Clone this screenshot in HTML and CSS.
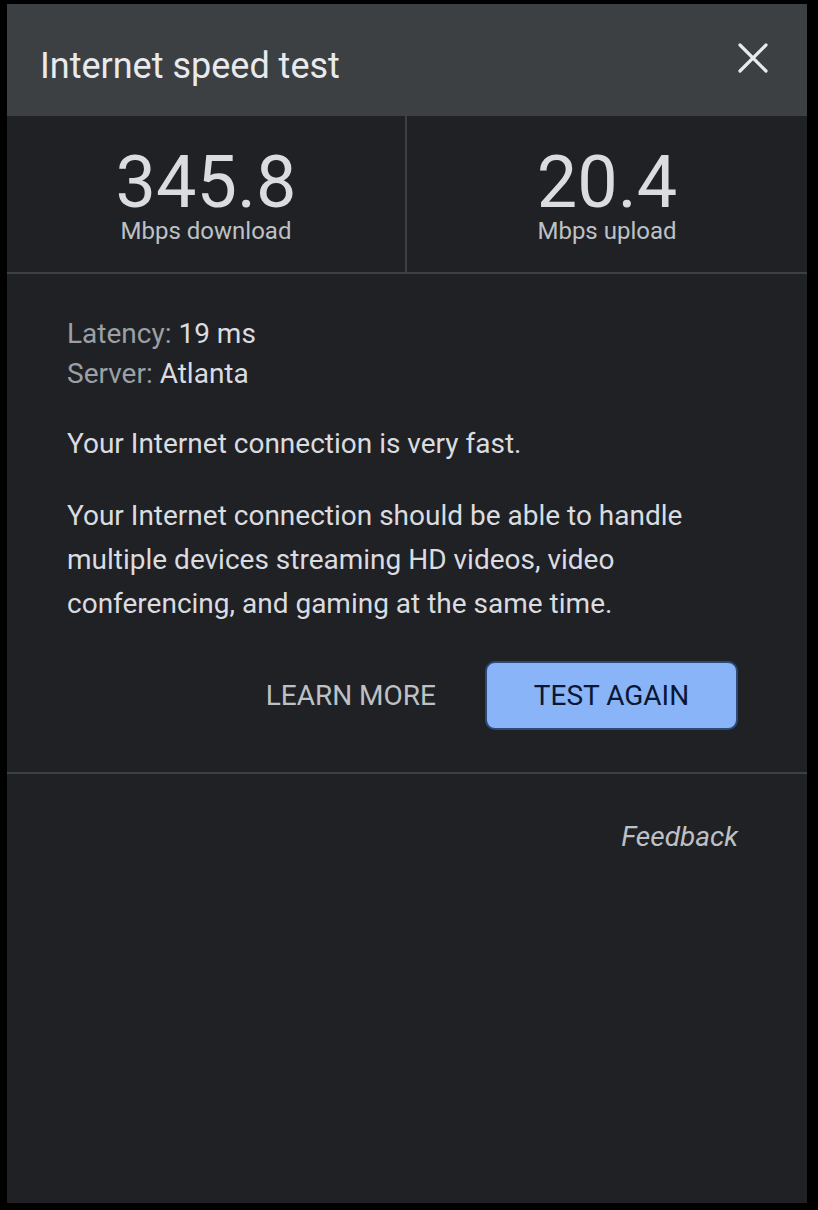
FILE: index.html
```html
<!DOCTYPE html>
<html lang="en">
<head>
  <meta charset="UTF-8" />
  <meta name="viewport" content="width=device-width, initial-scale=1.0"/>
  <title>Internet speed test</title>
  <link rel="stylesheet" href="styles.css">
</head>
<body>
  <div class="panel">
    <div class="panel-header">
      <h1>Internet speed test</h1>
      <button class="close" aria-label="Close">
        <svg width="30" height="30" viewBox="0 0 30 30">
          <path d="M2 2 L28 28 M28 2 L2 28" stroke="#e8eaed" stroke-width="3.2" stroke-linecap="round" fill="none"/>
        </svg>
      </button>
    </div>

    <div class="stats">
      <div class="stat">
        <span class="stat-value">345.8</span>
        <span class="stat-label">Mbps download</span>
      </div>
      <div class="stat">
        <span class="stat-value">20.4</span>
        <span class="stat-label">Mbps upload</span>
      </div>
    </div>

    <div class="details">
      <div class="meta">
        <div><span class="key">Latency:</span> 19 ms</div>
        <div><span class="key">Server:</span> Atlanta</div>
      </div>
      <p class="verdict">Your Internet connection is very fast.</p>
      <p class="summary">Your Internet connection should be able to handle multiple devices streaming HD videos, video conferencing, and gaming at the same time.</p>
      <div class="actions">
        <a class="learn-more" href="#">LEARN MORE</a>
        <button class="test-again">TEST AGAIN</button>
      </div>
    </div>

    <div class="footer">
      <a class="feedback" href="#">Feedback</a>
    </div>
  </div>
</body>
</html>
```

FILE: styles.css
```css
body {
  margin: 0;
  background-color: #000;
  font-family: Roboto, "Liberation Sans", Arial, sans-serif;
  color: #e8eaed;
}
.panel {
  width: 800px;
  height: 1199px;
  margin: 4px 0 0 7px;
  background: #202124;
  display: flex;
  flex-direction: column;
}
.panel-header {
  height: 112px;
  background: #3c4043;
  display: flex;
  align-items: center;
  justify-content: space-between;
  padding: 0 39px 0 33px;
  box-sizing: border-box;
}
.panel-header h1 {
  margin: 0;
  font-size: 36px;
  font-weight: 400;
  color: #e8eaed;
  padding-top: 12px;
}
.close {
  background: none;
  border: none;
  padding: 0;
  width: 30px;
  height: 30px;
  margin-top: -4px;
}
.stats {
  display: grid;
  grid-template-columns: 400px 1fr;
  height: 158px;
  border-bottom: 2px solid #3c4043;
  box-sizing: border-box;
}
.stat {
  display: flex;
  flex-direction: column;
  align-items: center;
  padding-top: 32px;
}
.stat:first-child {
  border-right: 2px solid #3c4043;
}
.stat-value {
  font-size: 72px;
  line-height: 70px;
  color: #dadce0;
}
.stat-label {
  font-size: 24px;
  line-height: 26px;
  color: #bdc1c6;
}
.details {
  padding: 40px 69px 42px 60px;
  border-bottom: 2px solid #3c4043;
  font-size: 28px;
  color: #dadce0;
}
.meta {
  line-height: 40px;
}
.key {
  color: #9aa0a6;
}
.verdict {
  margin: 28px 0 0;
  line-height: 44px;
}
.summary {
  margin: 28px 0 0;
  line-height: 44px;
}
.actions {
  display: flex;
  align-items: center;
  justify-content: flex-end;
  gap: 49px;
  margin-top: 35px;
}
.learn-more {
  color: #bdc1c6;
  text-decoration: none;
  font-size: 28px;
}
.test-again {
  width: 253px;
  height: 69px;
  background: #8ab4f8;
  border: 2px solid #2b4a78;
  border-radius: 10px;
  color: #0b1733;
  font-family: inherit;
  font-size: 28px;
}
.footer {
  display: flex;
  justify-content: flex-end;
  padding: 46px 69px 0 0;
}
.feedback {
  font-style: italic;
  font-size: 28px;
  color: #bdc1c6;
  text-decoration: none;
}
```
